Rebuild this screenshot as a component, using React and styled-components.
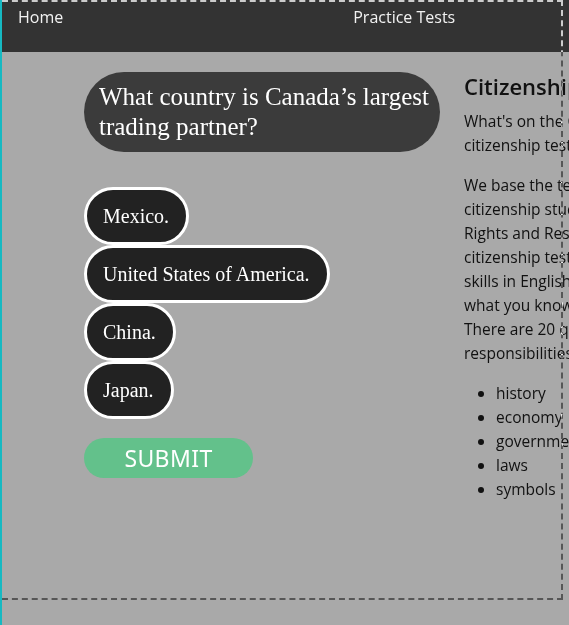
import React from 'react'
import styled, { createGlobalStyle } from 'styled-components'

const GlobalStyle = createGlobalStyle`
    html, body {
        margin: 0;
        padding: 0;
        overflow: hidden;
        background: #16b9c2;
    }
    * { box-sizing: border-box; }
`;

const Page = styled.div`
    position: relative;
    margin-left: 2px;
    min-height: 625px;
    width: 567px;
    background: #a9a9a9;
    font-family: "Open Sans", "Noto Sans", sans-serif;
`;

const Outline = styled.div`
    position: absolute;
    left: 0;
    top: 0;
    width: 561px;
    height: 600px;
    border: 2px dashed #ffffff;
    border-left: none;
    mix-blend-mode: difference;
    pointer-events: none;
    z-index: 5;
`;

const Nav = styled.nav`
    height: 52px;
    background: #333333;
    display: flex;
    align-items: flex-start;
    gap: 290px;
    padding: 6px 16px 0;
`;

const NavLink = styled.a`
    color: #f2f2f2;
    font-size: 16px;
    line-height: 22px;
    text-decoration: none;
`;

const Main = styled.main`
    display: flex;
    align-items: flex-start;
    padding: 20px 0 0 82px;
    width: 1000px;
`;

const QuizColumn = styled.section`
    width: 356px;
    flex-shrink: 0;
    display: flex;
    flex-direction: column;
    align-items: flex-start;
`;

const Question = styled.h1`
    margin: 0 0 35px;
    width: 356px;
    padding: 10px 4px 10px 15px;
    background: #3b3b3b;
    border-radius: 40px;
    color: #ffffff;
    font-family: "Liberation Serif", serif;
    font-weight: normal;
    font-size: 25px;
    line-height: 30px;
`;

const Options = styled.div`
    display: flex;
    flex-direction: column;
    align-items: flex-start;
    margin-bottom: 19px;
`;

const Option = styled.button`
    height: 58px;
    padding: 0 17px 0 16px;
    background: ${p => (p.selected ? '#3f3f3f' : '#222222')};
    border: 3px solid #ffffff;
    border-radius: 29px;
    color: #ffffff;
    font-family: "Liberation Serif", serif;
    font-size: 20px;
    cursor: pointer;
`;

const Submit = styled.button`
    width: 169px;
    height: 40px;
    border: none;
    border-radius: 20px;
    background: #63c18b;
    color: #ffffff;
    font-family: "Noto Sans", "Open Sans", sans-serif;
    font-size: 23px;
    letter-spacing: 0.4px;
    cursor: pointer;
`;

const Info = styled.aside`
    margin-left: 24px;
    width: 380px;
    flex-shrink: 0;
    color: #111111;
`;

const Title = styled.h2`
    margin: 1px 0 10px;
    font-size: 22px;
    line-height: 26px;
    font-weight: 600;
`;

const Para = styled.p`
    margin: 0 0 16px;
    font-size: 15.5px;
    line-height: 24px;
`;

const Topics = styled.ul`
    margin: 0;
    padding-left: 32px;
    font-size: 15.5px;
    line-height: 24px;
`;

const answers = ['Mexico.', 'United States of America.', 'China.', 'Japan.']
const topics = ['history', 'economy', 'government', 'laws', 'symbols']

export default function App() {
    return (
        <>
            <GlobalStyle />
            <Page>
                <Nav>
                    <NavLink href="#">Home</NavLink>
                    <NavLink href="#">Practice Tests</NavLink>
                </Nav>
                <Main>
                    <QuizColumn>
                        <Question>What country is Canada’s largest trading partner?</Question>
                        <Options>
                            {answers.map(a => <Option key={a}>{a}</Option>)}
                        </Options>
                        <Submit>SUBMIT</Submit>
                    </QuizColumn>
                    <Info>
                        <Title>Citizenship Test</Title>
                        <Para>
                            What's on the Canadian<br />
                            citizenship test?
                        </Para>
                        <Para>
                            We base the test questions on the official<br />
                            citizenship study guide, Discover Canada: The<br />
                            Rights and Responsibilities of Citizenship. The<br />
                            citizenship test checks your knowledge and<br />
                            skills in English or French. It tests<br />
                            what you know about Canada.<br />
                            There are 20 questions about the rights and<br />
                            responsibilities of Canadians and about:
                        </Para>
                        <Topics>
                            {topics.map(t => <li key={t}>{t}</li>)}
                        </Topics>
                    </Info>
                </Main>
                <Outline />
            </Page>
        </>
    )
}
